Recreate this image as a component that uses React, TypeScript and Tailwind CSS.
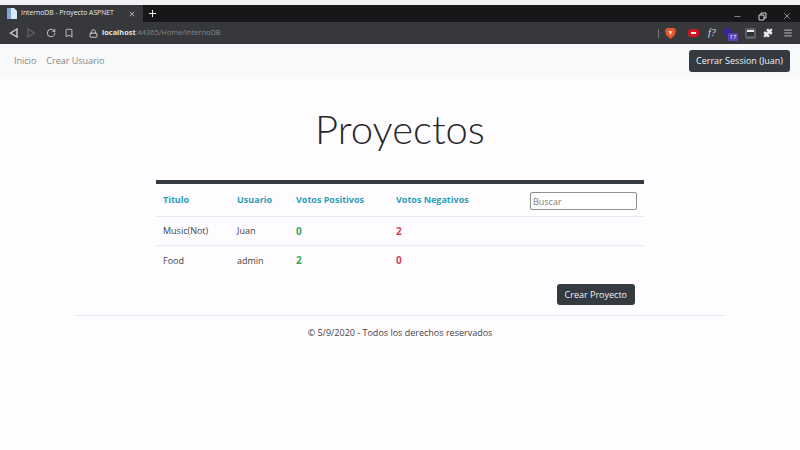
import { Bookmark, Lock, Menu, Minus, Plus, Puzzle, RotateCw, X } from "lucide-react"

const rows = [
  { title: "Music(Not)", user: "Juan", up: 0, down: 2 },
  { title: "Food", user: "admin", up: 2, down: 0 },
]

function BrowserChrome() {
  return (
    <div className="shrink-0">
      <div className="h-[5px] bg-[#f1f1f3]" />
      {/* tab strip */}
      <div className="flex h-[17px] items-end bg-[#17171a]">
        <div className="flex h-[17px] w-[143px] items-center bg-[#36383b] pl-[7px] pr-[7px]">
          <svg width="10" height="11" viewBox="0 0 10 11" className="shrink-0">
            <path d="M0 0h7l3 3v8H0z" fill="#dbe7f5" />
            <path d="M0 0h4v11H0z" fill="#7fa6d6" />
          </svg>
          <span className="ml-[4px] flex-1 whitespace-nowrap text-[6.8px] leading-none text-[#e8e8e8]">InternoDB - Proyecto ASPNET</span>
          <X size={8} strokeWidth={2} className="text-[#e8e8e8]" />
        </div>
        <Plus size={11} strokeWidth={2} className="mb-[3px] ml-[4px] text-white" />
        <div className="flex-1" />
        <div className="mb-[1px] flex w-[94px] items-center justify-between pl-[27px] pr-[8px] text-[#d4d4d4]">
          <Minus size={9} strokeWidth={1.5} />
          <svg width="9" height="9" viewBox="0 0 9 9" fill="none" stroke="currentColor">
            <path d="M1 3h5v5H1zM3 3V1h5v5H6" />
          </svg>
          <X size={10} strokeWidth={1.5} />
        </div>
      </div>
      {/* toolbar */}
      <div className="flex h-[22px] items-center bg-[#36383b] pl-[9px] pr-[7px] text-[#d8d8d8]">
        <svg width="9" height="10" viewBox="0 0 9 10" fill="none" stroke="currentColor" strokeWidth="1.3">
          <path d="M8 1L1.500 5 8 9z" />
        </svg>
        <svg width="9" height="10" viewBox="0 0 9 10" fill="none" stroke="#66686b" strokeWidth="1.1" className="ml-[9px]">
          <path d="M1 1l6.500 4L1 9z" />
        </svg>
        <RotateCw size={10} strokeWidth={2} className="ml-[10px]" />
        <Bookmark size={10} strokeWidth={2} className="ml-[8px]" />
        <Lock size={9} strokeWidth={2.4} className="ml-[15px]" />
        <span className="ml-[4px] text-[7.4px] leading-none">
          <span className="font-bold text-[#e4e4e4]">localhost</span>
          <span className="text-[#85878a]">:44365/Home/InternoDB</span>
        </span>
        <div className="flex-1" />
        <div className="h-[9px] w-px bg-[#777]" />
        <svg width="11" height="12" viewBox="0 0 11 12" className="ml-[6px]">
          <path d="M2 1h7l2 2-1 5-4.500 4L1 8 0 3z" fill="#e2572c" />
          <path d="M3.500 4h4L5.500 8z" fill="#f4d6c8" />
        </svg>
        <svg width="11" height="8" viewBox="0 0 11 8" className="ml-[12px]">
          <rect width="11" height="8" rx="3.500" fill="#d3151d" />
          <rect x="3" y="3" width="5" height="2" fill="#f3f3f3" />
        </svg>
        <span className="ml-[9px] w-[11px] font-['Liberation_Serif',serif] text-[10px] italic leading-none text-[#dddddd]">f?</span>
        <div className="relative ml-[5px] h-[11px] w-[13px]">
          <div className="h-[8px] w-[8px] rounded-full bg-[#3a2399]" />
          <span className="absolute bottom-[-2px] right-[-1px] flex h-[8px] w-[10px] items-center justify-center rounded-[1px] bg-[#5b3fb8] text-[6px] leading-none text-white">17</span>
        </div>
        <div className="ml-[8px] flex h-[11px] w-[11px] items-center justify-center rounded-[2px] bg-[#5d5f62]">
          <div className="h-[6px] w-[7px] border-t-2 border-[#f0f0f0] bg-[#2f3033]" />
        </div>
        <Puzzle size={10} fill="currentColor" strokeWidth={1} className="ml-[7px] text-[#eeeeee]" />
        <Menu size={10} strokeWidth={2} className="ml-[10px]" />
      </div>
    </div>
  )
}

export default function App() {
  return (
    <div className="flex h-[450px] w-[800px] flex-col overflow-hidden bg-[#fefcff] font-['Open_Sans','Noto_Sans',sans-serif] text-[9px] text-[#3f4347]">
      <BrowserChrome />

      <nav className="flex h-[33px] shrink-0 items-center justify-between bg-[#f8f9fa] pl-[14px] pr-[10px] text-[#858688]">
        <div className="flex gap-[10px]">
          <a>Inicio</a>
          <a>Crear Usuario</a>
        </div>
        <button className="mt-[1px] h-[22px] rounded-[3px] bg-[#343a40] px-[7px] text-[9px] text-[#f0f1f2]">Cerrar Session (Juan)</button>
      </nav>

      <main className="flex flex-1 flex-col items-center">
        <h1 className="mt-[25px] font-['Lato',sans-serif] text-[40px] font-light leading-[54px] text-[#26282b]">Proyectos</h1>

        <div className="mt-[24px] w-[488px]">
          <div className="h-[4px] bg-[#343a40]" />
          <div className="flex h-[33px] items-center border-b border-[#e9ecef] pl-[7px] pr-[7px] font-bold text-[#2a9fb5]">
            <span className="mb-[1px] w-[74px]">Titulo</span>
            <span className="mb-[1px] w-[59px]">Usuario</span>
            <span className="mb-[1px] w-[100px]">Votos Positivos</span>
            <span className="mb-[1px] flex-1">Votos Negativos</span>
            <input
              placeholder="Buscar"
              className="mt-[2px] h-[18px] w-[107px] rounded-[2px] border border-[#8f8f8f] bg-white px-[2px] font-normal text-[#757575] placeholder:text-[#808080]"
            />
          </div>
          {rows.map((r, i) => (
            <div key={r.title} className={i === 0 ? "flex h-[29px] items-center border-b border-[#e9ecef] px-[7px]" : "flex h-[29px] items-center px-[7px]"}>
              <span className="w-[74px]">{r.title}</span>
              <span className="w-[59px]">{r.user}</span>
              <span className="w-[100px] text-[10px] font-bold text-[#3aa655]">{r.up}</span>
              <span className="text-[10px] font-bold text-[#d0434f]">{r.down}</span>
            </div>
          ))}
          <div className="mt-[9px] flex justify-end pr-[9px]">
            <button className="h-[21px] rounded-[3px] bg-[#343a40] px-[8px] text-[9px] text-[#f0f1f2]">Crear Proyecto</button>
          </div>
        </div>

        <div className="mt-[10px] w-[650px] border-t border-[#e9ecef] pt-[10px] text-center">© 5/9/2020 - Todos los derechos reservados</div>
      </main>
    </div>
  )
}
